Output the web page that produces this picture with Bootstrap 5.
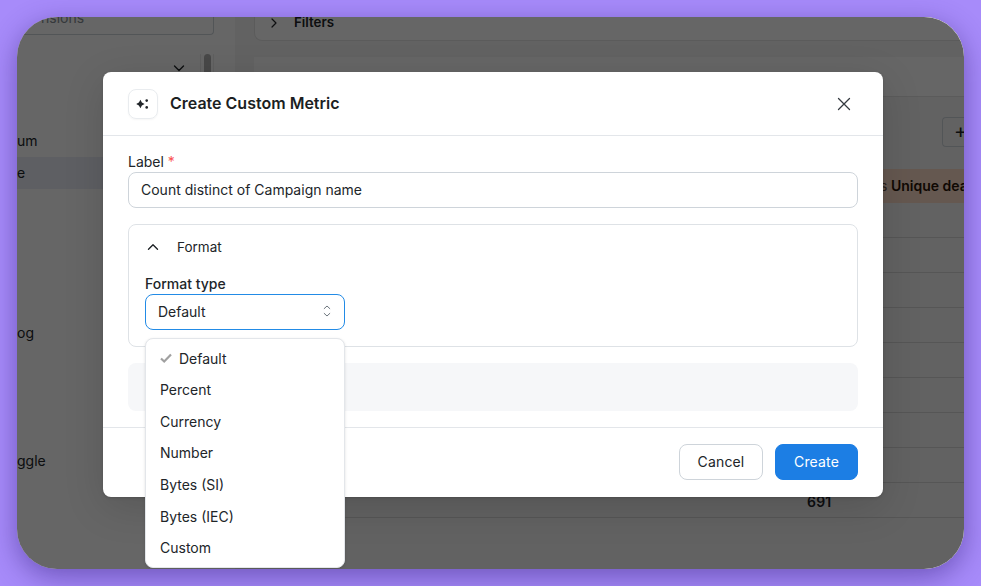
<!DOCTYPE html>
<html lang="en">
<head>
  <meta charset="UTF-8">
  <meta name="viewport" content="width=device-width, initial-scale=1.0">
  <title>Create Custom Metric</title>
  <link href="https://cdn.jsdelivr.net/npm/bootstrap@5.3.3/dist/css/bootstrap.min.css" rel="stylesheet">
  <style>
    html, body { height: 586px; overflow: hidden; }
    body { background: #a78bfa; font-family: Inter, "Liberation Sans", sans-serif; font-size: 14px; color: #212529; padding: 17px; }

    /* app window behind the dialog */
    .app-window { position: relative; width: 947px; height: 552px; border-radius: 40px; overflow: hidden; background: #fff; display: flex; box-shadow: 0 8px 28px rgba(40, 20, 110, .45); }
    .app-scrim { position: absolute; inset: 0; background: rgba(0, 0, 0, .6); }
    .side-col { width: 218px; flex: none; }
    .side-search { height: 18px; width: 197px; border: 1px solid #ced4da; border-top: 0; border-left: 0; border-radius: 0 0 4px 0; color: #868e96; padding-left: 24px; line-height: 1px; overflow: hidden; }
    .side-toggle { height: 32px; width: 197px; display: flex; justify-content: flex-end; gap: 14px; }
    .side-toggle svg { margin-top: 26px; }
    .side-rail { width: 14px; height: 32px; margin-top: 19px; padding: 0 2px 0 3px; border-left: 1px solid #eee; border-right: 1px solid #eee; }
    .side-rail div { height: 60px; background: #b4b4b4; border-radius: 4px; }
    .side-item { height: 32px; line-height: 32px; width: 218px; white-space: nowrap; }
    .side-item.active-row { background: #ecedf7; }
    .main-col { flex: 1; min-width: 0; padding-left: 19px; display: flex; flex-direction: column; background: #f6f6f6; }
    .filter-box { height: 24px; border: 1px solid #e3e3e3; border-top: 0; border-right: 0; border-radius: 0 0 0 8px; display: flex; align-items: center; font-weight: 600; font-size: 13.3px; color: #212529; padding: 0 0 11px 13px; gap: 14px; background: #fff; }
    .blank-box { height: 40px; margin-top: 16px; border-bottom: 1px solid #e3e3e3; background: #fff; }
    .tool-row { height: 72px; display: flex; justify-content: flex-end; align-items: flex-start; padding-top: 20px; }
    .plus-btn { width: 22px; height: 30px; border: 1px solid #ced4da; border-right: 0; border-radius: 4px 0 0 4px; font-size: 20px; line-height: 26px; padding-left: 11px; overflow: hidden; }
    .head-row { height: 34px; line-height: 34px; background: #fddcc8; font-weight: 600; color: #2a1608; white-space: nowrap; overflow: hidden; padding-left: 626px; }
    .head-row span { font-weight: 400; opacity: .7; }
    .data-row { height: 35px; border-bottom: 1px solid #d6d6d6; }
    .total-cell { padding: 8px 0 0 553px; font-weight: 600; color: #212529; letter-spacing: .2px; }

    /* dialog */
    .metric-dialog { position: absolute; left: 86px; top: 55px; width: 780px; height: 425px; }
    .metric-dialog .modal-content { height: 100%; background: #fff; border: 0; border-radius: 8px; box-shadow: 0 1px 3px rgba(0, 0, 0, .15), 0 10px 40px rgba(0, 0, 0, .14); display: flex; flex-direction: column; position: relative; }
    .metric-dialog .modal-header { height: 64px; padding: 0 25px; border-bottom: 1px solid #e3e6ea; gap: 12px; display: flex; align-items: center; }
    .metric-dialog .modal-title { font-size: 16px; font-weight: 600; color: #1c1f23; margin: -2px 0 0; line-height: 1.5; }
    .icon-tile { width: 30px; height: 30px; border: 1px solid #e9ecef; border-radius: 8px; display: flex; align-items: center; justify-content: center; box-shadow: 0 1px 2px rgba(0, 0, 0, .04); }
    .close-x { margin: 0 -1px 0 auto; background: none; border: 0; padding: 0; width: 30px; height: 30px; display: flex; align-items: center; justify-content: center; }
    .metric-dialog .modal-body { padding: 17px 25px 0; flex: none; height: 291px; position: relative; }
    .field-label { display: block; line-height: 18px; margin-bottom: 1px; font-weight: 400; color: #212529; }
    .req { color: #fa5252; }
    .metric-dialog .form-control { height: 36px; border-color: #ced4da; border-radius: 8px; padding: 0 12px 2px; font-size: 14px; color: #212529; }
    .format-panel { margin-top: 16px; height: 123px; border: 1px solid #dee2e6; border-radius: 8px; padding: 0 16px; }
    .format-head { height: 44px; display: flex; align-items: center; gap: 17px; padding: 0 0 0 1px; font-size: 13.5px; }
    .type-label { line-height: 18px; margin: 6px 0 1px; font-weight: 500; }
    .select-box { width: 200px; height: 36px; border: 1px solid #228be6; border-radius: 8px; background: #fff; padding: 0 11px 2px 12px; display: flex; align-items: center; justify-content: space-between; color: #212529; font-size: 14px; }
    .grey-panel { margin-top: 16px; height: 48px; background: #f6f7f9; border-radius: 8px; }
    .metric-dialog .modal-footer { padding: 0 25px 1px; flex: none; height: 70px; border-top: 1px solid #e3e6ea; gap: 12px; display: flex; justify-content: flex-end; align-items: center; }
    .metric-dialog .modal-footer .btn { margin: 0; width: 84px; height: 36px; border-radius: 8px; font-size: 14px; font-weight: 400; letter-spacing: .15px; padding: 0 0 2px; }
    .btn-cancel { background: #fff; border: 1px solid #ced4da; color: #212529; }
    .btn-create { background: #1c7ee4; border: 1px solid #1c7ee4; color: #fff; width: 83px !important; }

    /* open select menu */
    .metric-dialog .format-menu { position: absolute; display: block; left: 42px; top: 266px; width: 200px; height: 230px; min-width: 0; margin: 0; padding: 3.6px 0 0; background: #fff; border: 1px solid #e3e6ea; border-radius: 8px; box-shadow: 0 1px 3px rgba(0, 0, 0, .12); font-size: 14px; list-style: none; }
    .format-menu .dropdown-item { height: 31.6px; line-height: 31.6px; padding: 0 14px; color: #212529; display: flex; align-items: center; gap: 7px; }
  </style>
</head>
<body>

<div class="app-window">
  <!-- page behind -->
  <div class="side-col">
    <div class="side-search">nsions</div>
    <div class="side-toggle">
      <svg width="14" height="14" viewBox="0 0 14 14" fill="none" stroke="#212529" stroke-width="1.4" stroke-linecap="round" stroke-linejoin="round"><path d="M2.5 5l4.5 4.5L11.5 5"/></svg>
      <div class="side-rail"><div></div></div>
    </div>
    <div style="height:58px"></div>
    <div class="side-item">um</div>
    <div class="side-item active-row">e</div>
    <div style="height:128px"></div>
    <div class="side-item">og</div>
    <div style="height:96px"></div>
    <div class="side-item">ggle</div>
  </div>
  <div class="main-col">
    <div class="filter-box">
      <svg width="12" height="12" viewBox="0 0 12 12" fill="none" stroke="#212529" stroke-width="1.2" stroke-linecap="round" stroke-linejoin="round"><path d="M4 2l4 4-4 4"/></svg>
      <span>Filters</span>
    </div>
    <div class="blank-box"></div>
    <div class="tool-row"><div class="plus-btn">+</div></div>
    <div class="head-row"><span>s</span> Unique dea</div>
    <div class="data-row"></div>
    <div class="data-row"></div>
    <div class="data-row"></div>
    <div class="data-row"></div>
    <div class="data-row"></div>
    <div class="data-row"></div>
    <div class="data-row"></div>
    <div class="data-row"></div>
    <div class="data-row total-cell">691</div>
  </div>
  <div class="app-scrim"></div>

  <!-- dialog -->
  <div class="metric-dialog">
    <div class="modal-content">
      <div class="modal-header">
        <div class="icon-tile">
          <svg width="14" height="14" viewBox="0 0 14 14" fill="#212529"><path d="M4.4 2.8L5.9 5.5 8.6 7 5.9 8.5 4.4 11.2 2.9 8.5 .2 7 2.9 5.5z"/><circle cx="10.7" cy="3.6" r="1.3"/><circle cx="10.7" cy="10.4" r="1.3"/></svg>
        </div>
        <h5 class="modal-title">Create Custom Metric</h5>
        <button type="button" class="close-x" aria-label="Close">
          <svg width="16" height="16" viewBox="0 0 16 16" fill="none" stroke="#343a40" stroke-width="1.3" stroke-linecap="round"><path d="M2.5 2.5l11 11M13.5 2.5l-11 11"/></svg>
        </button>
      </div>
      <div class="modal-body">
        <label class="field-label">Label <span class="req">*</span></label>
        <input class="form-control" type="text" value="Count distinct of Campaign name">
        <div class="format-panel">
          <div class="format-head">
            <svg width="14" height="14" viewBox="0 0 14 14" fill="none" stroke="#212529" stroke-width="1.4" stroke-linecap="round" stroke-linejoin="round"><path d="M2.5 9.2L7 4.8l4.5 4.4"/></svg>
            <span>Format</span>
          </div>
          <div class="type-label">Format type</div>
          <button type="button" class="select-box">
            <span>Default</span>
            <svg width="12" height="16" viewBox="0 0 12 16" fill="none" stroke="#6c757d" stroke-width="1" stroke-linecap="round" stroke-linejoin="round"><path d="M3.2 5.6L6 3l2.8 2.6M3.2 10.4L6 13l2.8-2.6"/></svg>
          </button>
        </div>
        <div class="grey-panel"></div>
      </div>
      <div class="modal-footer">
        <button type="button" class="btn btn-cancel">Cancel</button>
        <button type="button" class="btn btn-create">Create</button>
      </div>
      <ul class="dropdown-menu format-menu">
        <li><a class="dropdown-item" href="#"><svg width="12" height="12" viewBox="0 0 12 12" fill="none" stroke="#a0a0a0" stroke-width="2.2"><path d="M1 6.5l3.2 3L11 2.5"/></svg>Default</a></li>
        <li><a class="dropdown-item" href="#">Percent</a></li>
        <li><a class="dropdown-item" href="#">Currency</a></li>
        <li><a class="dropdown-item" href="#">Number</a></li>
        <li><a class="dropdown-item" href="#">Bytes (SI)</a></li>
        <li><a class="dropdown-item" href="#">Bytes (IEC)</a></li>
        <li><a class="dropdown-item" href="#">Custom</a></li>
      </ul>
    </div>
  </div>
</div>

<script src="https://cdn.jsdelivr.net/npm/bootstrap@5.3.3/dist/js/bootstrap.bundle.min.js"></script>
</body>
</html>
